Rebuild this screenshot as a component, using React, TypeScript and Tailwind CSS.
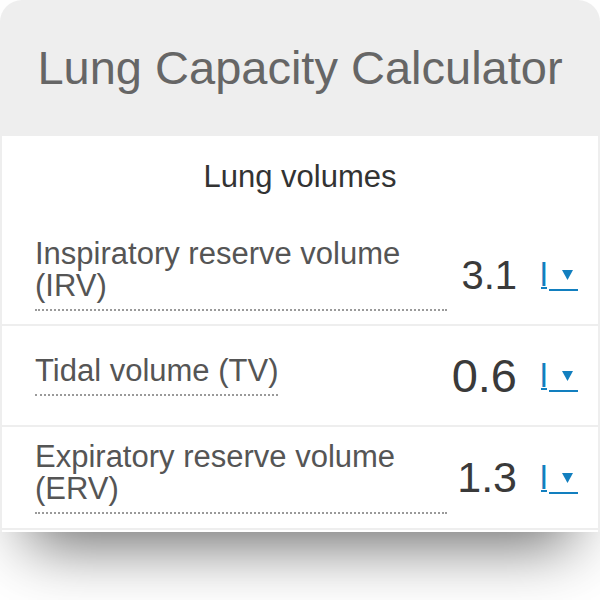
import React from "react";

const FONT = { fontFamily: '"Liberation Sans", Arial, Helvetica, sans-serif' };

type Row = { label: string; value: string; size: string };

const ROWS: Row[] = [
  { label: "Inspiratory reserve volume (IRV)", value: "3.1", size: "text-[40px]" },
  { label: "Tidal volume (TV)", value: "0.6", size: "text-[47px]" },
  { label: "Expiratory reserve volume (ERV)", value: "1.3", size: "text-[43px]" },
];

function UnitSelect() {
  return (
    <div className="flex items-end text-[#127fbf]">
      <span className="inline-block w-[6px] overflow-visible border-b-2 border-[#127fbf] text-[34px] leading-[26px]">
        <span className="ml-[-1px]">l</span>
      </span>
      <span className="mb-[-2px] ml-[2px] flex h-[30px] w-[29px] items-center justify-end border-b-2 border-[#127fbf] pr-[5px]">
        <svg width="11" height="10" viewBox="0 0 11 10">
          <path d="M0 0 H11 L5.5 10 Z" fill="#127fbf" />
        </svg>
      </span>
    </div>
  );
}

function VolumeRow({ row, last }: { row: Row; last?: boolean }) {
  return (
    <div
      className={`flex items-center border-b-2 border-[#eeeeee] pl-[33px] pr-[20px] ${
        last ? "min-h-[103px]" : "min-h-[101px]"
      }`}
    >
      <div className="flex-1">
        <span className="inline-block max-w-[412px] border-b-2 border-dotted border-[#9a9a9a] pb-[7px] text-[31px] leading-[32px] text-[#555]">
          {row.label}
        </span>
      </div>
      <div className={`${row.size} leading-none text-[#3a3a3a]`}>{row.value}</div>
      <div className="ml-[24px]">
        <UnitSelect />
      </div>
    </div>
  );
}

export default function App() {
  return (
    <div className="h-[600px] w-[600px] overflow-hidden bg-white" style={FONT}>
      <div className="h-[532px] overflow-hidden rounded-t-[22px] bg-[#eeeeee] shadow-[0_40px_60px_-28px_rgba(0,0,0,0.6)]">
        <div className="flex h-[136px] items-center justify-center text-[47px] text-[#666]">
          Lung Capacity Calculator
        </div>
        <div className="mx-[2px] bg-white">
          <div className="flex h-[89px] items-center justify-center pb-[6px] text-[31px] text-[#333]">
            Lung volumes
          </div>
          {ROWS.map((r, i) => (
            <VolumeRow key={r.label} row={r} last={i === ROWS.length - 1} />
          ))}
          <div className="h-[10px]" />
        </div>
      </div>
    </div>
  );
}
